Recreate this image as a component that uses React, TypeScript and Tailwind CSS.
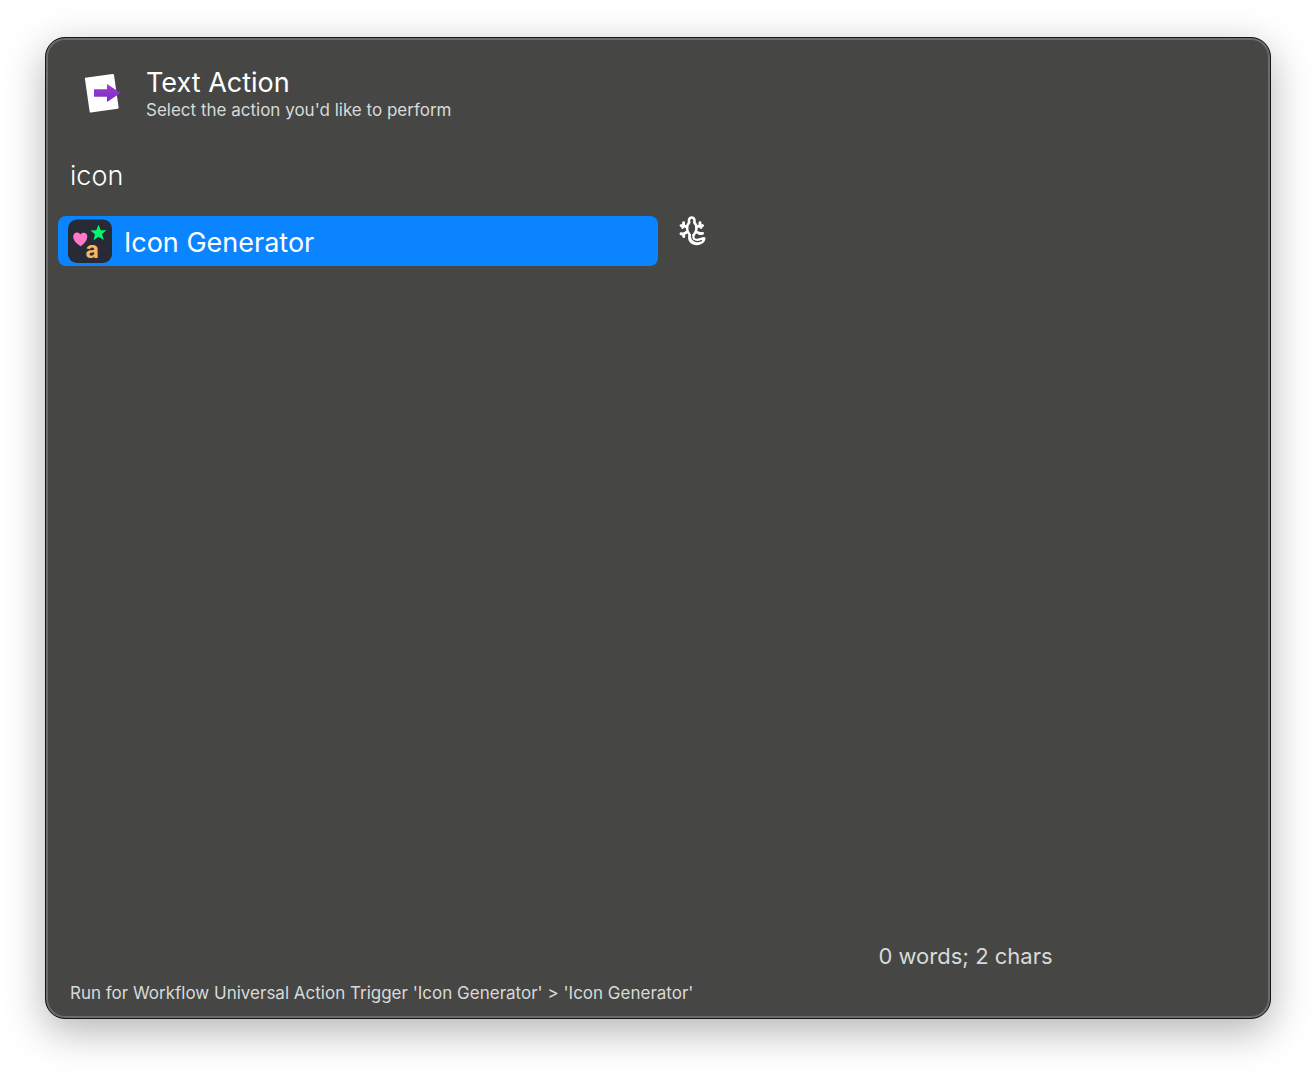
import { useState } from "react";

function TextActionIcon() {
  return (
    <svg viewBox="0 0 44 48" className="h-12 w-11 shrink-0" aria-hidden="true">
      <defs>
        <linearGradient id="arrow" x1="0" y1="0" x2="0" y2="1">
          <stop offset="0" stopColor="#a23bd6" />
          <stop offset="1" stopColor="#7430c0" />
        </linearGradient>
      </defs>
      <path d="M5.2 7.8 32.6 4a1.2 1.2 0 0 1 1.4 1L38.6 37.4a1.2 1.2 0 0 1-1 1.4L11 42.600a1.2 1.2 0 0 1-1.4-1L5 9.200a1.2 1.2 0 0 1 .2-1.4Z" fill="#fff" />
      <path d="M14 19.200h13V14L40.6 23 27 32V26.800H14Z" fill="url(#arrow)" />
    </svg>
  );
}

function GeneratorIcon() {
  return (
    <svg viewBox="0 0 44 44" className="size-11 shrink-0" aria-hidden="true">
      <rect y="0.500" width="44" height="43.500" rx="9" fill="#282a36" />
      <path d="M12.8 27.300C8.500 24.800 5.200 21.300 5.200 17.800c0-4.600 5.200-5.700 7-2.300 2.200-3.100 7.300-2 7.100 2.100-.1 3.700-2.700 7-6.500 9.700Z" fill="#ff79c6" />
      <path d="m30.500 5.800 2.200 5.400 5.700.1-4.400 3.800 1.800 6-5.300-3.400-5 3.500 1.500-6-4.600-3.700 5.900-.3Z" fill="#00fa6b" />
      <text x="17.500" y="38.500" fontFamily="Inter, sans-serif" fontWeight="700" fontSize="23" fill="#ffb558">a</text>
    </svg>
  );
}

function Lizard() {
  return (
    <svg viewBox="0 0 28 30" className="h-[30px] w-7" role="img" aria-label="lizard" fill="none" stroke="#fff" strokeLinecap="round" strokeLinejoin="round">
      <path d="M8 11 4 9.600M17.400 11 21.400 9.600M8 16 4.200 18.200M17.400 16 21.200 17.600" strokeWidth="2.800" />
      <path d="M4.600 6.800V9.600H2M4.600 9.600 3.600 11.400M21 6.800V9.600H23.600M21 9.600 22 11.400M2 17.800 4.600 18.200 4.800 20.600M23.600 17.400 21.200 17.600" strokeWidth="2.900" />
      <path d="M12.700 1.600C10.300 1.600 9.300 4 10.300 6.400 8.700 8 7.900 10.500 8.100 13 8.300 15.800 10.100 17.800 11 19.500H14.400C15.400 17.800 17.200 15.800 17.400 13 17.600 10.500 16.800 8 15.200 6.400 16.200 4 15.100 1.600 12.700 1.600Z" strokeWidth="2.500" />
      <path d="M9.600 18.500C7.500 24.500 12 29.300 17.800 29.200 22.700 29 26.700 26 26.500 21.800 25 19.800 22.800 21.800 20.800 22 18.500 23.300 15.800 22.900 15.500 21.500 15.200 20.500 15.400 19.500 15.800 18.500Z" fill="#fff" stroke="none" />
      <path d="M12.600 18V21.500C13.200 25 17.500 26.800 22.500 24.600" stroke="#464645" strokeWidth="1.200" />
    </svg>
  );
}

export default function App() {
  const [query, setQuery] = useState("icon");
  return (
    <div className="flex min-h-screen flex-col bg-white px-[45px] pt-[37px] pb-[53px] font-['Inter','Liberation_Sans',sans-serif]">
      <main className="flex grow flex-col rounded-[20px] border border-[#161616] bg-[#464645] px-3 pt-7 pb-3 shadow-[inset_0_0_0_2px_#6c6c6b,0_12px_40px_rgba(0,0,0,0.3)]">
        <header className="flex items-start gap-[18px] pl-[22px]">
          <div className="pt-1">
            <TextActionIcon />
          </div>
          <div className="pl-1">
            <h1 className="pt-px text-[27px] leading-8 text-white">Text Action</h1>
            <p className="text-[17px] leading-[22px] text-[#d8dad9]">Select the action you'd like to perform</p>
          </div>
        </header>
        <input
          aria-label="Filter actions"
          value={query}
          onChange={(e) => setQuery(e.target.value)}
          className="mt-8 h-11 w-full bg-transparent px-3 text-[27px] font-light text-white outline-none"
        />
        <div className="mt-[19px] grid grow grid-cols-[600px_minmax(0,1fr)] gap-3">
          <div>
            <button className="flex h-[50px] w-full items-center gap-3 rounded-lg bg-[#0a84ff] px-[10px] text-left text-[27px] text-white">
              <GeneratorIcon />
              <span className="pt-1">Icon Generator</span>
            </button>
          </div>
          <section className="flex flex-col justify-between pr-[6px] pl-[9px]">
            <Lizard />
            <p className="text-center text-[22px] leading-8 text-[#d8dad9]">0 words; 2 chars</p>
          </section>
        </div>
        <footer className="mt-[9px] px-3 pb-px text-[17px] leading-6 text-[#d8dad9]">
          Run for Workflow Universal Action Trigger 'Icon Generator' &gt; 'Icon Generator'
        </footer>
      </main>
    </div>
  );
}
